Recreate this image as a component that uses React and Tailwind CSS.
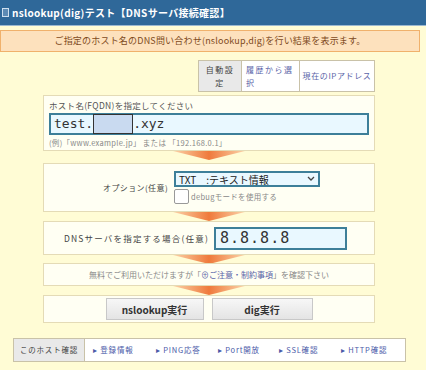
import React from "react";

const jp = { fontFamily: '"Noto Sans CJK JP", "Noto Sans", sans-serif' };

function Arrow({ h }) {
  return (
    <div className={`flex justify-center ${h}`}>
      <svg width="72" height="9" viewBox="0 0 72 9">
        <defs>
          <linearGradient id="ag" x1="0" x2="1" y1="0" y2="0">
            <stop offset="0" stopColor="#fbd2a8" />
            <stop offset="0.5" stopColor="#ef7a3c" />
            <stop offset="1" stopColor="#fbd2a8" />
          </linearGradient>
        </defs>
        <polygon points="0,0 72,0 36,9" fill="url(#ag)" />
      </svg>
    </div>
  );
}

const box = "border border-[#e4dbb6] bg-[#fffff3]";

export default function App() {
  return (
    <div className="w-[426px] h-[370px] overflow-hidden bg-[#fffcd5]" style={jp}>
      {/* title */}
      <div className="h-[26px] bg-[#2f6899] border-b border-[#9cb8d0] flex items-center pl-[2px] gap-[3px]">
        <div className="w-[7px] h-[9px] border border-[#cfe0ef] bg-[#5d8bb5]" />
        <span className="text-[10px] font-bold text-white tracking-[0.3px]">nslookup(dig)テスト【DNSサーバ接続確認】</span>
      </div>

      {/* notice */}
      <div className="mt-[4px] w-[420px] h-[22px] bg-[#fde1bd] border border-[#f0b16c] flex items-center justify-center">
        <span className="text-[9px] text-[#7d4a1c] tracking-[0.2px]">ご指定のホスト名のDNS問い合わせ(nslookup,dig)を行い結果を表示ます。</span>
      </div>

      <div className="ml-[43px] w-[332px] flex flex-col">
        {/* tabs */}
        <div className="mt-[8px] h-[32px] self-end flex border border-[#c9c2a8] text-[8px]">
          <div className="w-[42px] bg-[#e9e9e9] text-[#444] flex flex-col items-center justify-center leading-[13px] tracking-[1.5px]">
            <div>自動設</div>
            <div>定</div>
          </div>
          <div className="w-[58px] bg-white border-l border-[#c9c2a8] text-[#5a64a8] leading-[13px] px-[4px] flex flex-col justify-center tracking-[1.5px]">
            <div>履歴から選</div>
            <div>択</div>
          </div>
          <div className="w-[75px] bg-white border-l border-[#c9c2a8] text-[#5a64a8] flex items-center justify-center tracking-[0.6px]">現在のIPアドレス</div>
        </div>

        {/* host */}
        <div className={`${box} mt-[3px] h-[56px] px-[5px] pt-[3px]`}>
          <div className="text-[8.5px] text-[#555] leading-[12px] tracking-[0.3px]">ホスト名(FQDN)を指定してください</div>
          <div className="mt-[2px] h-[22px] border-2 border-[#3d7f99] bg-[#e9f8ff] flex items-center text-[13px] text-[#333]" style={{ fontFamily: '"DejaVu Sans Mono", monospace' }}>
            <span className="pl-[3px]">test.</span>
            <span className="w-[40px] h-[20px] bg-[#c9daf0] border border-[#333]" />
            <span>.xyz</span>
          </div>
          <div className="mt-[3px] text-[7.5px] text-[#888] leading-[10px] tracking-[0.3px]">(例)「www.example.jp」 または 「192.168.0.1」</div>
        </div>

        <Arrow h="h-[12px]" />

        {/* option */}
        <div className={`${box} h-[49px] flex items-center`}>
          <div className="w-[130px] text-right pr-[6px] text-[8px] text-[#444] tracking-[0.4px]">オプション(任意)</div>
          <div className="flex flex-col gap-[2px]">
            <div className="w-[146px] h-[16px] border-2 border-[#3d7f99] bg-[#e9f8ff] flex items-center justify-between px-[3px] text-[10px] text-[#222]">
              <span>TXT　:テキスト情報</span>
              <svg width="8" height="6" viewBox="0 0 8 6"><path d="M1 1 L4 4 L7 1" stroke="#444" strokeWidth="1.3" fill="none" /></svg>
            </div>
            <div className="flex items-center gap-[2px]">
              <div className="w-[15px] h-[15px] border border-[#999] bg-white rounded-[2px]" />
              <span className="text-[7.5px] text-[#888] tracking-[0.3px]">debugモードを使用する</span>
            </div>
          </div>
        </div>

        <Arrow h="h-[9px]" />

        {/* dns */}
        <div className={`${box} h-[34px] flex items-center`}>
          <div className="w-[170px] text-right pr-[5px] text-[8.5px] text-[#444] tracking-[1.2px]">DNSサーバを指定する場合(任意)</div>
          <div className="w-[133px] h-[23px] border-2 border-[#3d7f99] bg-[#e9f8ff] flex items-center pl-[4px] text-[15px] text-[#333] tracking-[1px]" style={{ fontFamily: '"DejaVu Sans Mono", monospace' }}>8.8.8.8</div>
        </div>

        <Arrow h="h-[8px]" />

        {/* notice */}
        <div className={`${box} h-[23px] flex items-center justify-center`}>
          <span className="text-[8px] text-[#888]">
            無料でご利用いただけますが「<span className="text-[#5a64a8]">⊕ご注意・制約事項</span>」を確認下さい
          </span>
        </div>

        <Arrow h="h-[9px]" />

        {/* buttons */}
        <div className={`${box} h-[28px] flex items-center justify-center gap-[8px]`}>
          <button className="w-[98px] h-[22px] bg-gradient-to-b from-[#f7f7f7] to-[#e4e4e4] border border-[#c8c8c8] text-[10px] font-bold text-[#333]">nslookup実行</button>
          <button className="w-[101px] h-[22px] bg-gradient-to-b from-[#f7f7f7] to-[#e4e4e4] border border-[#c8c8c8] text-[10px] font-bold text-[#333]">dig実行</button>
        </div>
      </div>

      {/* bottom nav */}
      <div className="mt-[15px] ml-[13px] w-[393px] h-[24px] border border-[#c9c2a8] bg-white flex items-center text-[7.5px] tracking-[0.8px]">
        <div className="w-[71px] h-full bg-[#e9e9e9] text-[#444] flex items-center justify-center border-r border-[#c9c2a8]">このホスト確認</div>
        <div className="flex">
          <span className="ml-[8px] w-[63px] text-[#4a5aa8]">▸ 登録情報</span>
          <span className="w-[62px] text-[#4a5aa8]">▸ PING応答</span>
          <span className="w-[61px] text-[#4a5aa8]">▸ Port開放</span>
          <span className="w-[62px] text-[#4a5aa8]">▸ SSL確認</span>
          <span className="text-[#4a5aa8]">▸ HTTP確認</span>
        </div>
      </div>
    </div>
  );
}
